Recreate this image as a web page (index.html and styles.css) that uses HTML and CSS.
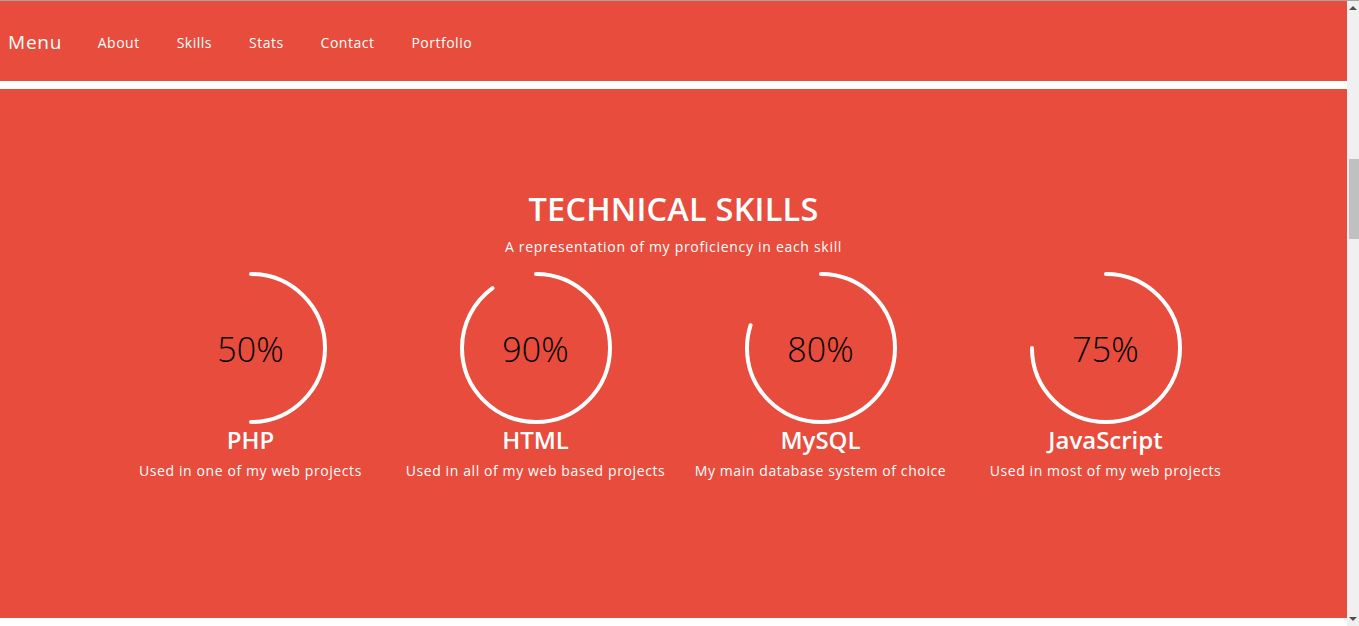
FILE: index.html
```html
<!DOCTYPE html>
<html lang="en">
<head>
<meta charset="utf-8">
<title>Technical Skills</title>
<link rel="stylesheet" href="styles.css">
</head>
<body>
<div class="topline"></div>
<div class="frame">
  <div class="page">
    <nav class="nav">
      <span class="brand">Menu</span>
      <a class="link" href="#">About</a>
      <a class="link" href="#">Skills</a>
      <a class="link" href="#">Stats</a>
      <a class="link" href="#">Contact</a>
      <a class="link" href="#">Portfolio</a>
    </nav>
    <div class="gap"></div>
    <section class="skills">
      <h1 class="title">TECHNICAL SKILLS</h1>
      <p class="subtitle">A representation of my proficiency in each skill</p>
      <div class="grid">
        <div class="skill">
          <div class="ring">
            <svg class="ring-svg" width="152" height="152" viewBox="0 0 152 152"><circle cx="76" cy="76" r="74" pathLength="100" stroke-dasharray="50 100"/></svg>
            <span class="pct">50%</span>
          </div>
          <h2 class="name">PHP</h2>
          <p class="desc">Used in one of my web projects</p>
        </div>
        <div class="skill">
          <div class="ring">
            <svg class="ring-svg" width="152" height="152" viewBox="0 0 152 152"><circle cx="76" cy="76" r="74" pathLength="100" stroke-dasharray="90 100"/></svg>
            <span class="pct">90%</span>
          </div>
          <h2 class="name">HTML</h2>
          <p class="desc">Used in all of my web based projects</p>
        </div>
        <div class="skill">
          <div class="ring">
            <svg class="ring-svg" width="152" height="152" viewBox="0 0 152 152"><circle cx="76" cy="76" r="74" pathLength="100" stroke-dasharray="80 100"/></svg>
            <span class="pct">80%</span>
          </div>
          <h2 class="name">MySQL</h2>
          <p class="desc">My main database system of choice</p>
        </div>
        <div class="skill">
          <div class="ring">
            <svg class="ring-svg" width="152" height="152" viewBox="0 0 152 152"><circle cx="76" cy="76" r="74" pathLength="100" stroke-dasharray="75 100"/></svg>
            <span class="pct">75%</span>
          </div>
          <h2 class="name">JavaScript</h2>
          <p class="desc">Used in most of my web projects</p>
        </div>
      </div>
    </section>
  </div>
  <div class="scrollbar">
    <div class="arrow-up"></div>
    <div class="track"><div class="thumb"></div></div>
    <div class="arrow-down"></div>
  </div>
</div>
</body>
</html>
```

FILE: styles.css
```css
html, body {
  margin: 0;
  padding: 0;
  height: 100%;
  overflow: hidden;
}
body {
  display: flex;
  flex-direction: column;
  font-family: "Open Sans", "Noto Sans", sans-serif;
  background: #ffffff;
}
.topline {
  height: 1px;
  background: #a3a3a3;
  flex: none;
}
.frame {
  flex: 1;
  display: flex;
  min-height: 0;
}
.page {
  flex: 1;
  display: flex;
  flex-direction: column;
  min-width: 0;
}
.nav {
  height: 80px;
  background: #e74c3c;
  display: flex;
  align-items: center;
  padding-left: 8px;
  flex: none;
}
.brand {
  color: #fff;
  font-size: 19px;
  letter-spacing: 0.8px;
  margin-right: 17px;
  position: relative;
  top: 1px;
}
.link {
  color: #fff;
  text-decoration: none;
  font-size: 14px;
  letter-spacing: 0.5px;
  padding: 0 18.5px;
  position: relative;
  top: 1px;
}
.gap {
  height: 8px;
  flex: none;
}
.skills {
  height: 529px;
  background: #e74c3c;
  flex: none;
  padding-top: 100px;
  box-sizing: border-box;
  text-align: center;
  color: #fff;
}
.title {
  margin: 0;
  font-size: 32.5px;
  font-weight: 600;
  line-height: 40px;
  letter-spacing: 0.2px;
}
.subtitle {
  margin: 8px 0 0;
  font-size: 14px;
  letter-spacing: 0.7px;
  line-height: 20px;
}
.grid {
  width: 1140px;
  margin: 15px auto 0;
  padding-left: 9px;
  display: grid;
  grid-template-columns: repeat(4, 285px);
}
.skill {
  display: flex;
  flex-direction: column;
  align-items: center;
}
.ring {
  position: relative;
  width: 152px;
  height: 152px;
}
.ring-svg {
  display: block;
  transform: rotate(-90deg);
}
.ring-svg circle {
  fill: none;
  stroke: #ffffff;
  stroke-width: 4;
  stroke-linecap: round;
}
.pct {
  position: absolute;
  inset: 0;
  display: flex;
  align-items: center;
  justify-content: center;
  padding-top: 2px;
  font-size: 34px;
  font-weight: 300;
  color: #000;
}
.name {
  margin: 1px 0 0;
  font-size: 24px;
  font-weight: 600;
  line-height: 30px;
}
.desc {
  margin: 7px 0 0;
  font-size: 14px;
  letter-spacing: 0.6px;
  line-height: 18px;
}
.scrollbar {
  width: 12px;
  background: #f0f0f0;
  display: flex;
  flex-direction: column;
  flex: none;
}
.arrow-up, .arrow-down {
  height: 14px;
  display: flex;
  justify-content: center;
  align-items: center;
  flex: none;
}
.arrow-up::before {
  content: "";
  border-left: 4px solid transparent;
  border-right: 4px solid transparent;
  border-bottom: 4px solid #505050;
}
.arrow-down::before {
  content: "";
  border-left: 4px solid transparent;
  border-right: 4px solid transparent;
  border-top: 4px solid #505050;
}
.track {
  flex: 1;
  padding-top: 144px;
  padding-left: 2px;
}
.thumb {
  height: 80px;
  background: #c0c0c0;
}
```
